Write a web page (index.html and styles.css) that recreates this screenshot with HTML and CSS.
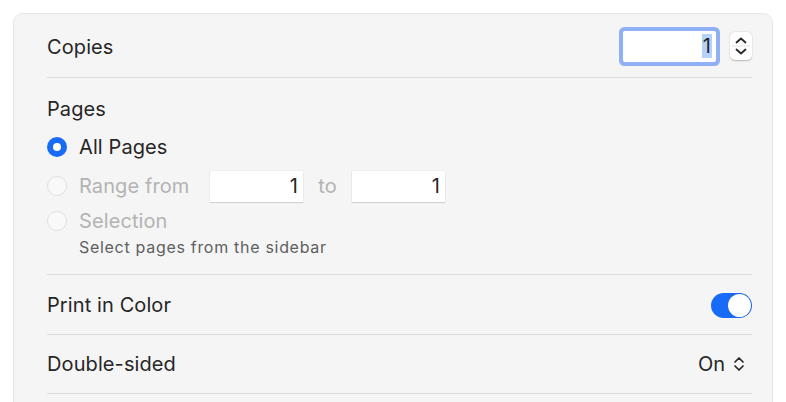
FILE: index.html
```html
<!DOCTYPE html>
<html>
<head>
<meta charset="utf-8">
<link rel="stylesheet" href="styles.css">
</head>
<body>
<div class="panel">
  <div class="row copies">
    <span class="label">Copies</span>
    <div class="copies-ctrl">
      <div class="focus-field"><span class="sel">1</span></div>
      <div class="stepper">
        <svg width="22" height="28" viewBox="0 0 22 28">
          <path d="M6.5 10.5 L11 6.5 L15.5 10.5" fill="none" stroke="#262626" stroke-width="1.8" stroke-linecap="round" stroke-linejoin="round"/>
          <line x1="2" y1="14" x2="20" y2="14" stroke="#e2e2e2" stroke-width="1"/>
          <path d="M6.5 17.5 L11 21.5 L15.5 17.5" fill="none" stroke="#262626" stroke-width="1.8" stroke-linecap="round" stroke-linejoin="round"/>
        </svg>
      </div>
    </div>
  </div>
  <div class="section pages">
    <div class="label title">Pages</div>
    <div class="opt opt-all">
      <span class="radio on"></span>
      <span class="label">All Pages</span>
    </div>
    <div class="opt opt-range">
      <span class="radio off"></span>
      <span class="label dis range-lbl">Range from</span>
      <span class="num-field">1</span>
      <span class="label dis to">to</span>
      <span class="num-field">1</span>
    </div>
    <div class="opt opt-sel">
      <span class="radio off"></span>
      <span class="label dis">Selection</span>
    </div>
    <div class="hint">Select pages from the sidebar</div>
  </div>
  <div class="row color">
    <span class="label">Print in Color</span>
    <span class="toggle"><span class="knob"></span></span>
  </div>
  <div class="row duplex">
    <span class="label">Double-sided</span>
    <span class="popup">On
      <svg width="12" height="18" viewBox="0 0 12 18">
        <path d="M2 7 L6 3 L10 7" fill="none" stroke="#262626" stroke-width="1.7" stroke-linecap="round" stroke-linejoin="round"/>
        <path d="M2 11 L6 15 L10 11" fill="none" stroke="#262626" stroke-width="1.7" stroke-linecap="round" stroke-linejoin="round"/>
      </svg>
    </span>
  </div>
  <div class="row last"></div>
</div>
</body>
</html>
```
FILE: styles.css
```css
html, body {
  margin: 0;
  padding: 0;
  background: #ffffff;
  overflow: hidden;
}
body {
  padding: 13px 0 0 13px;
  font-family: "Inter", "Liberation Sans", sans-serif;
  color: #262626;
}
.panel {
  width: 760px;
  height: 420px;
  box-sizing: border-box;
  background: #f5f5f5;
  border: 1px solid #e6e6e6;
  border-radius: 10px;
  padding: 0 20px 0 33px;
}
.label {
  font-size: 20px;
  line-height: 24px;
  letter-spacing: 0.1px;
  color: #262626;
}
.label.dis {
  color: #b3b3b3;
}
.row {
  display: flex;
  align-items: center;
  justify-content: space-between;
  border-bottom: 1px solid #dcdcdc;
  box-sizing: border-box;
}
.copies {
  height: 64px;
  padding-top: 3px;
}
.copies-ctrl {
  display: flex;
  align-items: center;
  gap: 14px;
  margin-top: -2px;
}
.focus-field {
  width: 93px;
  height: 31px;
  box-sizing: border-box;
  background: #ffffff;
  border-radius: 2px;
  box-shadow: 0 0 0 4px #8fb0f4;
  display: flex;
  align-items: center;
  justify-content: flex-end;
  padding-right: 4px;
  font-size: 20px;
}
.sel {
  background: #b4d2fb;
  padding: 0 1px;
  line-height: 24px;
}
.stepper {
  width: 22px;
  height: 28px;
  background: #ffffff;
  border-radius: 5px;
  box-shadow: 0 0.5px 1.5px rgba(0,0,0,0.25);
  display: flex;
}
.section.pages {
  border-bottom: 1px solid #dcdcdc;
  padding: 19px 0 17px;
  display: flex;
  flex-direction: column;
}
.title {
  margin-bottom: 12px;
}
.opt {
  display: flex;
  align-items: center;
}
.opt-all {
  height: 28px;
}
.opt-range {
  height: 32px;
  margin-top: 9px;
}
.opt-sel {
  height: 28px;
  margin-top: 5px;
}
.radio {
  width: 20px;
  height: 20px;
  border-radius: 50%;
  box-sizing: border-box;
  margin-right: 12px;
  flex: none;
}
.radio.on {
  background: #176bf6;
  display: flex;
  align-items: center;
  justify-content: center;
}
.radio.on::after {
  content: "";
  width: 8px;
  height: 8px;
  border-radius: 50%;
  background: #ffffff;
}
.radio.off {
  background: #f9f9f9;
  border: 1px solid #e0e0e0;
}
.range-lbl {
  width: 131px;
}
.num-field {
  width: 93px;
  height: 31px;
  box-sizing: border-box;
  background: #ffffff;
  box-shadow: 0 1px 1px rgba(0,0,0,0.12), 0 0 0 0.5px rgba(0,0,0,0.05);
  text-align: right;
  padding-right: 5px;
  font-size: 20px;
  line-height: 31px;
  color: #262626;
}
.to {
  width: 49px;
  text-align: center;
}
.hint {
  margin-top: 2px;
  padding-left: 32px;
  font-size: 16px;
  letter-spacing: 0.7px;
  line-height: 20px;
  color: #606060;
}
.color {
  height: 60px;
  padding-top: 1px;
}
.toggle {
  width: 41px;
  height: 25px;
  border-radius: 13px;
  background: #176bf6;
  display: flex;
  align-items: center;
  justify-content: flex-end;
  padding-right: 1px;
  box-sizing: border-box;
}
.knob {
  width: 23px;
  height: 23px;
  border-radius: 50%;
  background: #ffffff;
  box-shadow: 0 0 1px rgba(0,0,0,0.3);
}
.duplex {
  height: 59px;
}
.popup {
  display: flex;
  align-items: center;
  gap: 8px;
  font-size: 20px;
  line-height: 24px;
  padding-right: 7px;
}
.last {
  height: 40px;
  border-bottom: none;
}
```
